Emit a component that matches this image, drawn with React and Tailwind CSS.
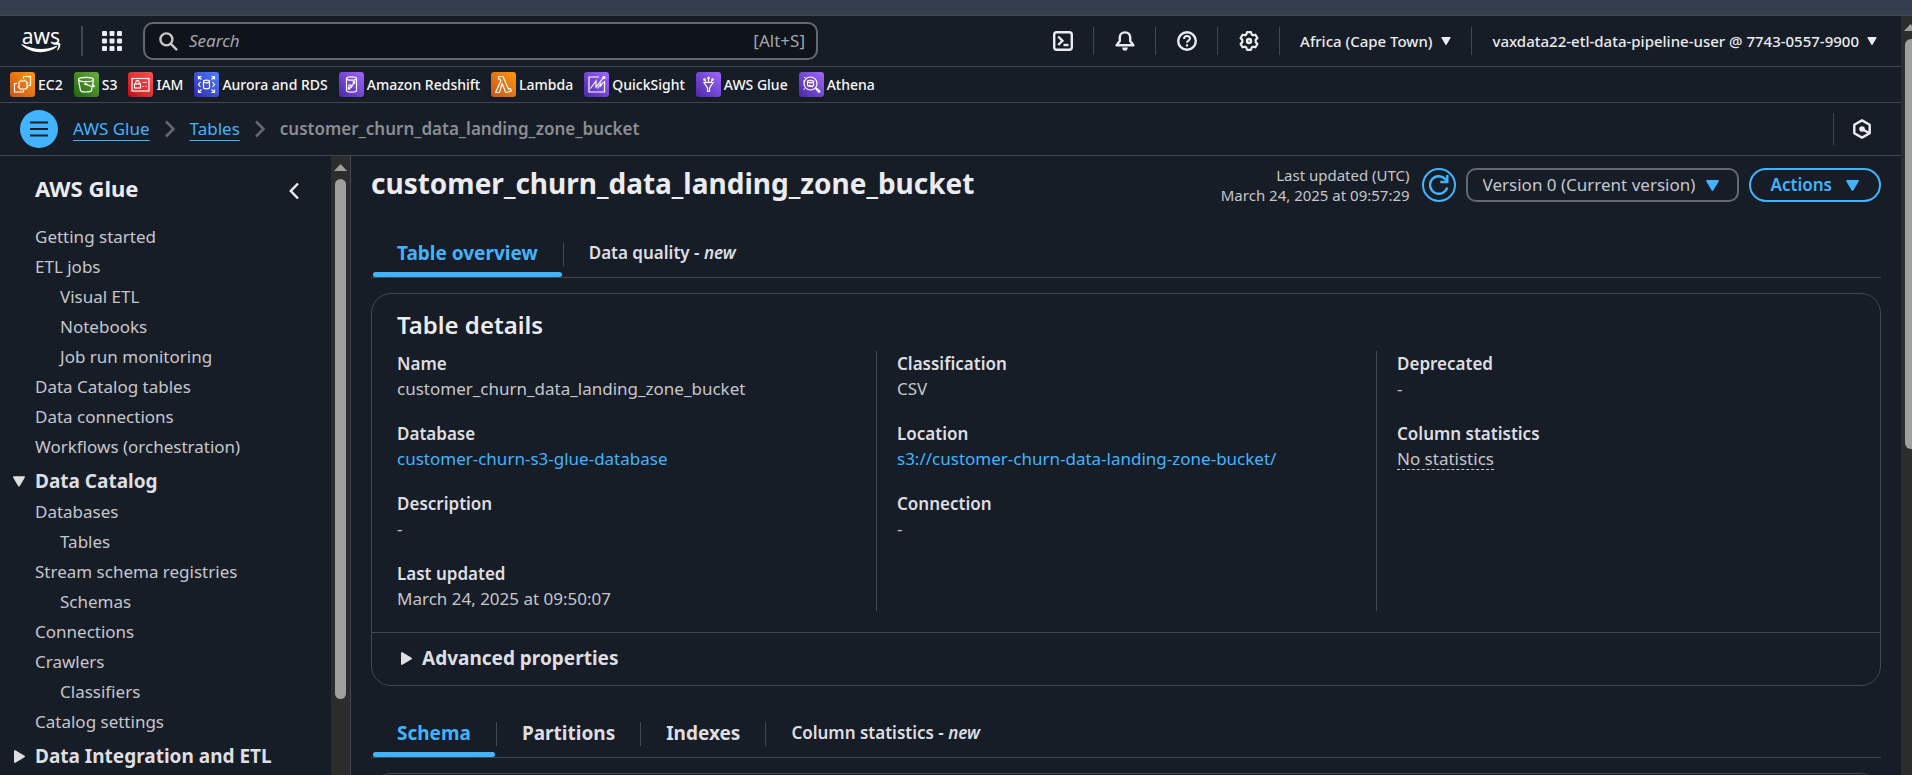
import React from "react";

const GRADIENTS = {
  orange: "from-[#c8511b] to-[#ff9900]",
  green: "from-[#1b660f] to-[#6cae3e]",
  red: "from-[#bd0816] to-[#ff5252]",
  blue: "from-[#2e27ad] to-[#527fff]",
  purple: "from-[#4d27a8] to-[#a166ff]",
};

const FAVORITES = [
  {
    name: "EC2",
    color: "orange",
    icon: (
      <>
        <rect x="9" y="9" width="8" height="8" rx="2" />
        <path d="M13.500 7V4.500h7v9h-2.500M7 11.500H4.500v8.500h9v-2" />
        <path d="M11 7.500v1.500M15 7.500v1.500M11 17v1.500M17 15h1.500M17 11h1.500M7.500 15H9" strokeWidth="0.8" />
      </>
    ),
  },
  {
    name: "S3",
    color: "green",
    icon: (
      <>
        <ellipse cx="12" cy="7.500" rx="7.500" ry="2.200" />
        <path d="M4.500 7.800 6.500 18.500c.6 2 10.400 2 11 0l2-10.700" />
        <path d="M11.500 12c3 1.500 6 2.800 8.500 2.600 1-.3-.4-1.600-2-2.600" />
        <circle cx="11.500" cy="12" r=".7" fill="currentColor" />
      </>
    ),
  },
  {
    name: "IAM",
    color: "red",
    icon: (
      <>
        <rect x="4" y="6.500" width="17" height="12.500" />
        <rect x="6.500" y="12" width="6" height="4" />
        <path d="M7.700 12v-1.500a1.800 1.800 0 0 1 3.600 0V12M14.500 10.500h4M14.500 14.500h1.500M17.500 14.500h1" />
      </>
    ),
  },
  {
    name: "Aurora and RDS",
    color: "blue",
    icon: (
      <>
        <ellipse cx="12.500" cy="9.500" rx="3" ry="1.300" />
        <path d="M9.500 9.500v6c0 1.700 6 1.700 6 0v-6" />
        <path d="M4.500 7.500v-3h3M4.500 4.500l3 3M17.500 4.500h3v3M20.500 4.500l-3 3M4.500 17.500v3h3M4.500 20.500l3-3M20.500 17.500v3h-3M20.500 20.500l-3-3" />
        <path d="M6.500 10 4.500 12.500l2 2.500M18.500 10l2 2.500-2 2.500" />
      </>
    ),
  },
  {
    name: "Amazon Redshift",
    color: "purple",
    icon: (
      <>
        <ellipse cx="12.500" cy="6.500" rx="5" ry="1.700" />
        <path d="M7.500 6.500v12c0 2.200 10 2.200 10 0v-12" />
        <path d="M10 16.500v-3.500h2v3l3-5.500" />
        <circle cx="10" cy="16.500" r=".8" />
        <circle cx="15" cy="10.500" r=".8" />
      </>
    ),
  },
  {
    name: "Lambda",
    color: "orange",
    icon: (
      <path
        d="M7.500 4.500h4.500l5.500 12.700 1.900-.7 1 2.500-4.700 1.500h-.9L11 11.500 8.500 20.500H4.500L9.800 9 9 7H7.500z"
        strokeLinejoin="round"
      />
    ),
  },
  {
    name: "QuickSight",
    color: "purple",
    icon: (
      <>
        <path d="M15 5H5v15h15.500V9" />
        <path d="M6.500 16.500 12 9v6l8-10M13.500 16.500 16.500 12v2l3-4" />
        <circle cx="20" cy="5.500" r="1" fill="currentColor" />
      </>
    ),
  },
  {
    name: "AWS Glue",
    color: "purple",
    icon: (
      <>
        <path d="M8 10.500h9L13.500 16v3.500h-2V16z" />
        <path d="M8.500 8l1.500 2M12.500 6v4M16.500 8l-1.500 2" />
        <circle cx="8.500" cy="7.500" r=".7" fill="currentColor" />
        <circle cx="12.500" cy="6" r=".7" fill="currentColor" />
        <circle cx="16.500" cy="7.500" r=".7" fill="currentColor" />
      </>
    ),
  },
  {
    name: "Athena",
    color: "purple",
    icon: (
      <>
        <circle cx="11.500" cy="11.500" r="6.500" />
        <path d="M16.300 16.300l3.700 4 1-1-4-3.700" />
        <ellipse cx="11.500" cy="9.500" rx="3" ry="1.200" />
        <path d="M8.500 9.500v3.500c0 1.700 6 1.700 6 0V9.500M10 13l4 2" />
        <path d="M5 5.500h1.500M4 9h1M4.500 17h1.500" />
      </>
    ),
  },
];

const NAV_TOP = [
  ["Getting started", 0],
  ["ETL jobs", 0],
  ["Visual ETL", 1],
  ["Notebooks", 1],
  ["Job run monitoring", 1],
  ["Data Catalog tables", 0],
  ["Data connections", 0],
  ["Workflows (orchestration)", 0],
];

const NAV_CATALOG = [
  ["Databases", 0],
  ["Tables", 1],
  ["Stream schema registries", 0],
  ["Schemas", 1],
  ["Connections", 0],
  ["Crawlers", 0],
  ["Classifiers", 1],
  ["Catalog settings", 0],
];

const link = "text-[#42b4ff]";

function Caret({ className = "" }) {
  return (
    <svg aria-hidden="true" viewBox="0 0 14 12" className={`shrink-0 fill-current ${className}`}>
      <path d="M1 0h12c.9 0 1.200.8.700 1.500L7.800 11.500c-.4.600-1.200.6-1.600 0L.3 1.500C-.2.800.1 0 1 0z" />
    </svg>
  );
}

function CaretRight({ className = "" }) {
  return (
    <svg aria-hidden="true" viewBox="0 0 12 14" className={`shrink-0 fill-current ${className}`}>
      <path d="M0 1v12c0 .9.800 1.200 1.500.7l10-5.900c.6-.4.6-1.200 0-1.600L1.500.3C.8-.2 0 .1 0 1z" />
    </svg>
  );
}

function Chevron() {
  return (
    <svg aria-hidden="true" viewBox="0 0 10 18" className="h-[18px] w-2.5 shrink-0 fill-none stroke-[#656871]" strokeWidth="2.500">
      <path d="M1 1.500 8.500 9 1 16.500" />
    </svg>
  );
}

function HeaderIcon({ label, children }) {
  return (
    <button type="button" aria-label={label} className="flex w-[61px] items-center justify-center">
      <svg viewBox="0 0 20 20" className="size-5 fill-none stroke-current" strokeWidth="2.400" strokeLinejoin="round">
        {children}
      </svg>
    </button>
  );
}

function Divider({ className = "h-7" }) {
  return <span aria-hidden="true" className={`w-px shrink-0 bg-[#424650] ${className}`} />;
}

function AwsLogo() {
  return (
    <a href="#home" aria-label="AWS home" className="flex w-10 flex-col items-center text-white">
      <span className="text-[21px] leading-[14px]">aws</span>
      <svg aria-hidden="true" viewBox="0 0 40 10" className="h-2.5 w-10 fill-current">
        <path d="M.5 1.800C.2 1.300.8.900 1.400 1.200c11 6 24 6 33.500 1.700.9-.3 1.500.6.800 1.200C27 11 10 11.500.5 1.800z" />
        <path d="M32.500 1.200C34.500-.2 38.500-.1 39.200.6c.7 1-.3 5.200-2.500 6.900-.4.200-.7 0-.5-.4.600-1.400 1.500-4.200 1-4.900-.5-.6-3.100-.4-4.400-.3-.5 0-.6-.4-.3-.7z" />
      </svg>
    </a>
  );
}

function TopBar() {
  return (
    <header className="flex h-[51px] shrink-0 items-center border-b border-[#424650] pr-6 pl-[21px]">
      <AwsLogo />
      <span aria-hidden="true" className="ml-5 h-[30px] w-0.5 bg-[#424650]" />
      <button type="button" aria-label="Services" className="ml-[19px]">
        <svg viewBox="0 0 20 20" className="size-5 fill-current">
          {[0, 7.500, 15].map((y) =>
            [0, 7.500, 15].map((x) => <rect key={`${x}-${y}`} x={x} y={y} width="5" height="5" rx="1" />)
          )}
        </svg>
      </button>
      <label className="ml-[21px] flex h-[38px] min-w-0 max-w-[675px] grow items-center gap-[11px] rounded-[10px] border-2 border-[#656871] bg-[#0f141a] pr-[11px] pl-3.5">
        <svg aria-hidden="true" viewBox="0 0 20 20" className="size-[19px] shrink-0 fill-none stroke-[#c6c6cd]" strokeWidth="2.500">
          <circle cx="7.800" cy="7.800" r="6.300" />
          <path d="M12.500 12.500l6.500 6.500" />
        </svg>
        <input
          type="text"
          aria-label="Search"
          placeholder="Search"
          className="min-w-0 grow bg-transparent text-[17px] outline-none placeholder:text-[#a4a4ad] placeholder:italic"
        />
        <span className="text-[17px] text-[#a4a4ad]">[Alt+S]</span>
      </label>
      <div className="ml-auto flex h-full items-center">
        <HeaderIcon label="CloudShell">
          <rect x="1.200" y="1.200" width="17.600" height="17.600" rx="2.500" />
          <path d="M5.200 5.500 9.500 9.800 5.200 14" strokeLinejoin="miter" />
          <path d="M10.500 14h5" />
        </HeaderIcon>
        <Divider />
        <HeaderIcon label="Notifications">
          <path d="M10 1.400c-3.200 0-5.200 2.300-5.200 5.200v3.400L1.600 14.200h16.800L15.200 10V6.600c0-2.900-2-5.200-5.200-5.200z" />
          <path d="M7 16.500h6l-1.200 3H8.200z" fill="currentColor" stroke="none" />
        </HeaderIcon>
        <Divider />
        <HeaderIcon label="Help">
          <circle cx="10" cy="10" r="8.800" />
          <path d="M7 8c0-1.800 1.300-3 3-3s3 1.100 3 2.600c0 2.200-3 2-3 4.200" strokeWidth="2" />
          <path d="M10 13.300v2.200" strokeWidth="2.200" />
        </HeaderIcon>
        <Divider />
        <HeaderIcon label="Settings">
          <path d="M8 1.200h4l.7 2.300 1.300.8 2.400-.6 2 3.400-1.700 1.700v2.400l1.700 1.700-2 3.400-2.400-.6-1.300.8-.7 2.300H8l-.7-2.300L6 15.700l-2.400.6-2-3.400 1.700-1.700V8.800L1.600 7.100l2-3.400 2.400.6 1.300-.8z" strokeWidth="2.200" />
          <circle cx="10" cy="10" r="2" />
        </HeaderIcon>
        <Divider />
        <button type="button" className="flex items-center gap-2 px-5 text-[15px] font-medium">
          Africa (Cape Town)
          <Caret className="h-2 w-2.5" />
        </button>
        <Divider />
        <button type="button" className="flex items-center gap-2 pl-[21px] text-[15px] font-medium">
          vaxdata22-etl-data-pipeline-user @ 7743-0557-9900
          <Caret className="h-2 w-2.5" />
        </button>
      </div>
    </header>
  );
}

function FavoritesBar() {
  return (
    <nav aria-label="Favorites" className="flex h-9 shrink-0 items-center gap-[11px] border-b border-[#424650] px-2.5">
      {FAVORITES.map((f) => (
        <a key={f.name} href={`#${f.name}`} className="flex items-center gap-[3px] text-sm font-medium whitespace-nowrap text-[#f9f9fa]">
          <span className={`size-[25px] shrink-0 rounded-[3px] bg-linear-to-tr text-white ${GRADIENTS[f.color]}`}>
            <svg aria-hidden="true" viewBox="0 0 25 25" className="size-full fill-none stroke-current" strokeWidth="1.200">
              {f.icon}
            </svg>
          </span>
          {f.name}
        </a>
      ))}
    </nav>
  );
}

function BreadcrumbBar() {
  return (
    <div className="flex h-[53px] shrink-0 items-center border-b border-[#424650] pr-[29px] pl-5">
      <button type="button" aria-label="Toggle navigation" className="flex size-[38px] items-center justify-center rounded-full bg-[#42b4ff]">
        <svg viewBox="0 0 18 16" className="h-4 w-[18px] fill-none stroke-[#161d26]" strokeWidth="2">
          <path d="M0 1.500h18M0 8h18M0 14.500h18" />
        </svg>
      </button>
      <nav aria-label="Breadcrumb" className="ml-[15px] flex items-center gap-[15px] text-[17px] leading-6">
        <a href="#glue" className={`${link} underline decoration-1 underline-offset-[5px]`}>AWS Glue</a>
        <Chevron />
        <a href="#tables" className={`${link} underline decoration-1 underline-offset-[5px]`}>Tables</a>
        <Chevron />
        <span className="font-semibold text-[#8c8c94]">customer_churn_data_landing_zone_bucket</span>
      </nav>
      <Divider className="ml-auto h-8" />
      <button type="button" aria-label="Amazon Q" className="ml-[18px]">
        <svg viewBox="0 0 20 20" className="size-5 fill-none stroke-current" strokeWidth="2.400">
          <path d="M10 1.400 17.700 5.700v8.600L10 18.600 2.300 14.300V5.700z" strokeLinejoin="round" />
          <circle cx="10" cy="10" r="2.800" fill="currentColor" stroke="none" />
          <path d="M10 10l7 4" />
        </svg>
      </button>
    </div>
  );
}

function NavList({ items }) {
  return (
    <ul>
      {items.map(([label, depth]) => (
        <li key={label} className={depth ? "pl-[25px]" : ""}>
          <a href={`#${label}`} className="block text-[17px] leading-[30px] whitespace-nowrap text-[#c6c6cd]">{label}</a>
        </li>
      ))}
    </ul>
  );
}

function Sidebar() {
  return (
    <aside className="flex w-[351px] shrink-0 border-r border-[#424650]">
      <div className="min-w-0 grow overflow-hidden pl-[35px]">
        <div className="flex items-end justify-between pt-[18px] pr-8 pb-5">
          <h2 className="text-[22px] leading-7 font-bold">AWS Glue</h2>
          <button type="button" aria-label="Close navigation" className="flex h-[22px] items-center">
            <svg viewBox="0 0 10 18" className="h-[18px] w-2.5 fill-none stroke-current" strokeWidth="2.500">
              <path d="M9 1.500 1.800 9 9 16.500" />
            </svg>
          </button>
        </div>
        <NavList items={NAV_TOP} />
        <button type="button" className="-ml-[22px] flex h-[35px] items-center gap-2.5 pt-[3px] text-[19px] font-bold text-[#dedee3]">
          <Caret className="h-[11px] w-3" />
          Data Catalog
        </button>
        <NavList items={NAV_CATALOG} />
        <button type="button" className="-ml-[22px] flex h-[35px] items-center gap-2.5 pt-[3px] pl-px text-[19px] font-bold whitespace-nowrap text-[#dedee3]">
          <CaretRight className="h-[13px] w-[11px]" />
          Data Integration and ETL
        </button>
      </div>
      <div aria-hidden="true" className="flex w-[19px] shrink-0 flex-col items-center bg-[#2c2c2c]">
        <svg viewBox="0 0 13 7" className="mt-2 h-[7px] w-[13px] fill-[#9f9f9f]"><path d="M6.500 0 13 7H0z" /></svg>
        <div className="mt-2 h-[84%] w-[11px] rounded-full bg-[#9f9f9f]" />
      </div>
    </aside>
  );
}

function Tabs({ label, tabs }) {
  return (
    <div role="tablist" aria-label={label} className="flex h-12 border-b border-[#424650]">
      {tabs.map((t, i) => (
        <div key={t.text} className="flex">
          {i > 0 && <Divider className="mt-3 h-6" />}
          <button
            type="button"
            role="tab"
            aria-selected={i === 0}
            className={`flex flex-col whitespace-nowrap ${i === 0 ? `mr-px ml-0.5 ${link}` : "text-[#dedee3]"}`}
          >
            <span
              className={`flex h-[42px] items-center pt-1 ${i === 0 ? "px-6" : "px-[25px]"} ${
                t.small ? "text-[17px] font-semibold" : "text-[19px] font-bold"
              }`}
            >
              <span>
                {t.text}
                {t.small && <> - <em>new</em></>}
              </span>
            </span>
            {i === 0 && <span className="h-[5px] w-full rounded-sm bg-[#42b4ff]" />}
          </button>
        </div>
      ))}
    </div>
  );
}

function Field({ label, children }) {
  return (
    <div className="leading-[25px]">
      <dt className="text-[17px] font-semibold text-[#dedee3]">{label}</dt>
      <dd className="text-[17px] text-[#c6c6cd]">{children}</dd>
    </div>
  );
}

function TableDetails() {
  return (
    <section className="rounded-[20px] border border-[#424650]">
      <h2 className="px-[25px] pt-[15px] pb-2.5 text-2xl leading-8 font-semibold">Table details</h2>
      <div className="grid grid-cols-3 px-1 pb-[21px]">
        <dl className="flex flex-col gap-5 pl-[21px]">
          <Field label="Name">customer_churn_data_landing_zone_bucket</Field>
          <Field label="Database"><a href="#database" className={link}>customer-churn-s3-glue-database</a></Field>
          <Field label="Description">-</Field>
          <Field label="Last updated">March 24, 2025 at 09:50:07</Field>
        </dl>
        <dl className="flex flex-col gap-5 border-l border-[#424650] pl-5">
          <Field label="Classification">CSV</Field>
          <Field label="Location"><a href="#location" className={link}>s3://customer-churn-data-landing-zone-bucket/</a></Field>
          <Field label="Connection">-</Field>
        </dl>
        <dl className="flex flex-col gap-5 border-l border-[#424650] pl-5">
          <Field label="Deprecated">-</Field>
          <Field label="Column statistics">
            <button type="button" className="border-b border-dashed border-current leading-[21px]">No statistics</button>
          </Field>
        </dl>
      </div>
      <div className="border-t border-[#424650] px-[29px]">
        <button type="button" className="flex h-[52px] items-center gap-2.5 pb-0.5 text-[19px] font-bold text-[#dedee3]">
          <CaretRight className="h-[13px] w-[11px]" />
          Advanced properties
        </button>
      </div>
    </section>
  );
}

function Main() {
  return (
    <main className="min-w-0 grow overflow-hidden px-5 pt-[9px]">
      <div className="flex h-[65px] items-start justify-between gap-4">
        <h1 className="text-[28px] leading-9 font-bold whitespace-nowrap">customer_churn_data_landing_zone_bucket</h1>
        <div className="flex items-center">
          <p className="text-right text-[15px] leading-5 text-[#c6c6cd]">
            Last updated (UTC)
            <br />
            March 24, 2025 at 09:57:29
          </p>
          <button type="button" aria-label="Refresh" className={`ml-3 flex size-[34px] items-center justify-center rounded-full border-2 border-current ${link}`}>
            <svg viewBox="0 0 20 20" className="size-5 fill-none stroke-current" strokeWidth="2.400">
              <path d="M18.300 12.500A8.800 8.800 0 1 1 16.500 4.200L18 6" />
              <path d="M18.300 0v7h-7" />
            </svg>
          </button>
          <div className="relative ml-2.5">
            <select aria-label="Table version" className="h-[34px] w-[273px] appearance-none rounded-[10px] border-2 border-[#656871] bg-[#161d26] pl-[15px] text-[17px] text-[#c6c6cd]">
              <option>Version 0 (Current version)</option>
            </select>
            <Caret className={`pointer-events-none absolute top-3 right-5 h-[11px] w-[13px] ${link}`} />
          </div>
          <button type="button" className={`ml-2.5 flex h-[34px] items-center gap-3.5 rounded-full border-2 border-current px-5 text-[17px] font-semibold ${link}`}>
            Actions
            <Caret className="h-[11px] w-[13px]" />
          </button>
        </div>
      </div>
      <Tabs label="Table" tabs={[{ text: "Table overview" }, { text: "Data quality", small: true }]} />
      <div className="pt-[15px] pb-6">
        <TableDetails />
      </div>
      <Tabs
        label="Table contents"
        tabs={[{ text: "Schema" }, { text: "Partitions" }, { text: "Indexes" }, { text: "Column statistics", small: true }]}
      />
      <section aria-label="Schema" className="mt-[15px] h-40 rounded-[20px] border border-[#424650]" />
    </main>
  );
}

export default function App() {
  return (
    <div className="flex h-screen flex-col overflow-hidden bg-[#161d26] font-['Noto_Sans',sans-serif] text-[#ebebf0]">
      <div className="h-4 shrink-0 border-b border-[#424650] bg-[#343d4d]" />
      <div className="flex min-h-0 grow">
        <div className="flex min-w-0 grow flex-col">
          <TopBar />
          <FavoritesBar />
          <BreadcrumbBar />
          <div className="flex min-h-0 grow">
            <Sidebar />
            <Main />
          </div>
        </div>
        <div aria-hidden="true" className="flex w-[11px] shrink-0 flex-col items-end overflow-hidden bg-[#2c2c2c]">
          <svg viewBox="0 0 8 7" className="mt-2 h-[7px] w-2 shrink-0 fill-[#9f9f9f]"><path d="M6.500 0 8 1.500V7H0z" /></svg>
          <div className="mt-2 h-[54%] w-[7px] rounded-l-md bg-[#9f9f9f]" />
        </div>
      </div>
    </div>
  );
}
